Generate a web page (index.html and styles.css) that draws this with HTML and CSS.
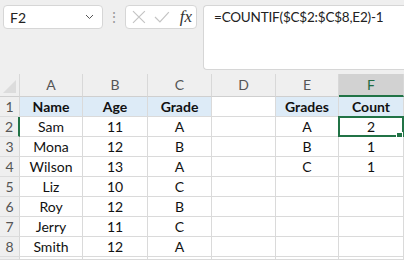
FILE: index.html
```html
<!DOCTYPE html>
<html lang="en">
<head>
    <meta charset="UTF-8">
    <title>COUNTIF</title>
    <link rel="stylesheet" href="styles.css">
</head>
<body>

    <div class="toolbar">
        <div class="namebox">
            <span>F2</span>
            <svg width="9" height="6" viewBox="0 0 9 6"><path d="M1 1 L4.5 4.5 L8 1" fill="none" stroke="#555" stroke-width="1"/></svg>
        </div>
        <div class="dots">⋮</div>
        <div class="funcbox">
            <svg width="14" height="14" viewBox="0 0 14 14"><path d="M1 1 L13 13 M13 1 L1 13" stroke="#c4c4c4" stroke-width="1.2"/></svg>
            <svg width="16" height="14" viewBox="0 0 16 14"><path d="M1 7 L6 12 L15 2" fill="none" stroke="#c4c4c4" stroke-width="1.2"/></svg>
            <span class="fx">fx</span>
        </div>
        <div class="formula">=COUNTIF($C$2:$C$8,E2)-1</div>
    </div>

    <div class="sheet">
        <div class="corner"><div class="tri"></div></div>
        <div class="colhead">A</div>
        <div class="colhead">B</div>
        <div class="colhead">C</div>
        <div class="colhead">D</div>
        <div class="colhead">E</div>
        <div class="colhead active">F</div>

        <div class="rowhead">1</div>
        <div class="cell head">Name</div>
        <div class="cell head">Age</div>
        <div class="cell head">Grade</div>
        <div class="cell"></div>
        <div class="cell head">Grades</div>
        <div class="cell head">Count</div>

        <div class="rowhead activerow">2</div>
        <div class="cell">Sam</div>
        <div class="cell">11</div>
        <div class="cell">A</div>
        <div class="cell"></div>
        <div class="cell">A</div>
        <div class="cell selected">2<span class="handle"></span></div>

        <div class="rowhead">3</div>
        <div class="cell">Mona</div>
        <div class="cell">12</div>
        <div class="cell">B</div>
        <div class="cell"></div>
        <div class="cell">B</div>
        <div class="cell">1</div>

        <div class="rowhead">4</div>
        <div class="cell">Wilson</div>
        <div class="cell">13</div>
        <div class="cell">A</div>
        <div class="cell"></div>
        <div class="cell">C</div>
        <div class="cell">1</div>

        <div class="rowhead">5</div>
        <div class="cell">Liz</div>
        <div class="cell">10</div>
        <div class="cell">C</div>
        <div class="cell"></div>
        <div class="cell"></div>
        <div class="cell"></div>

        <div class="rowhead">6</div>
        <div class="cell">Roy</div>
        <div class="cell">12</div>
        <div class="cell">B</div>
        <div class="cell"></div>
        <div class="cell"></div>
        <div class="cell"></div>

        <div class="rowhead">7</div>
        <div class="cell">Jerry</div>
        <div class="cell">11</div>
        <div class="cell">C</div>
        <div class="cell"></div>
        <div class="cell"></div>
        <div class="cell"></div>

        <div class="rowhead">8</div>
        <div class="cell">Smith</div>
        <div class="cell">12</div>
        <div class="cell">A</div>
        <div class="cell"></div>
        <div class="cell"></div>
        <div class="cell"></div>

        <div class="rowhead"></div>
        <div class="cell"></div>
        <div class="cell"></div>
        <div class="cell"></div>
        <div class="cell"></div>
        <div class="cell"></div>
        <div class="cell"></div>
    </div>

</body>
</html>
```

FILE: styles.css
```css
body {
    margin: 0;
    width: 404px;
    height: 260px;
    overflow: hidden;
    background-color: #efefef;
    font-family: Lato, "Liberation Sans", sans-serif;
}

.toolbar {
    display: flex;
    align-items: flex-start;
    height: 74px;
    padding: 5px 0 0 3px;
    box-sizing: border-box;
}

.namebox {
    width: 100px;
    height: 24px;
    box-sizing: border-box;
    background: white;
    border: 1px solid #d6d6d6;
    border-radius: 4px;
    display: flex;
    align-items: center;
    justify-content: space-between;
    padding: 0 8px 0 6px;
    font-size: 14px;
    color: #222;
}

.dots {
    width: 22px;
    text-align: center;
    color: #9a9a9a;
    font-size: 14px;
    line-height: 24px;
}

.funcbox {
    width: 72px;
    height: 24px;
    box-sizing: border-box;
    background: white;
    border: 1px solid #d6d6d6;
    border-radius: 4px;
    display: flex;
    align-items: center;
    gap: 8px;
    padding: 0 4px 0 6px;
}

.fx {
    font-family: "Liberation Serif", serif;
    font-style: italic;
    font-size: 17px;
    color: #333;
    margin-left: 2px;
}

.formula {
    margin-left: 6px;
    flex: 1;
    height: 65px;
    box-sizing: border-box;
    background: white;
    border: 1px solid #d6d6d6;
    border-right: none;
    border-radius: 4px 0 0 4px;
    padding: 3px 0 0 10px;
    font-size: 13.5px;
    letter-spacing: -0.2px;
    color: #222;
}

.sheet {
    display: grid;
    grid-template-columns: 20px 63px 65px 64px 64px 63px 65px;
    grid-template-rows: 23px repeat(8, 20px) 3px;
}

.corner {
    position: relative;
    border-right: 1px solid #d8d8d8;
    border-bottom: 1px solid #cfcfcf;
}

.tri {
    position: absolute;
    right: 3px;
    bottom: 3px;
    width: 0;
    height: 0;
    border-left: 13px solid transparent;
    border-bottom: 13px solid #dcdcdc;
}

.colhead {
    border-right: 1px solid #d8d8d8;
    border-bottom: 1px solid #cfcfcf;
    font-size: 14px;
    color: #555;
    text-align: center;
    line-height: 22px;
}

.colhead.active {
    background: #d2d2d2;
    color: #1f6b42;
    border-bottom: 2px solid #217346;
    line-height: 21px;
}

.rowhead {
    border-right: 1px solid #d8d8d8;
    border-bottom: 1px solid #dcdcdc;
    font-size: 14px;
    color: #555;
    text-align: center;
    line-height: 19px;
}

.activerow {
    border-right: 2px solid #217346;
}

.cell {
    position: relative;
    background: white;
    border-right: 1px solid #dadada;
    border-bottom: 1px solid #dadada;
    font-size: 14px;
    color: #111;
    text-align: center;
    line-height: 20px;
}

.cell.head {
    background: #ddebf7;
    font-weight: bold;
}

.selected {
    border: 2px solid #217346;
    margin: -1px 0 0 -1px;
    line-height: 18px;
}

.handle {
    position: absolute;
    right: -1px;
    bottom: -4px;
    width: 5px;
    height: 5px;
    background: #217346;
    border: 1px solid white;
}
```
